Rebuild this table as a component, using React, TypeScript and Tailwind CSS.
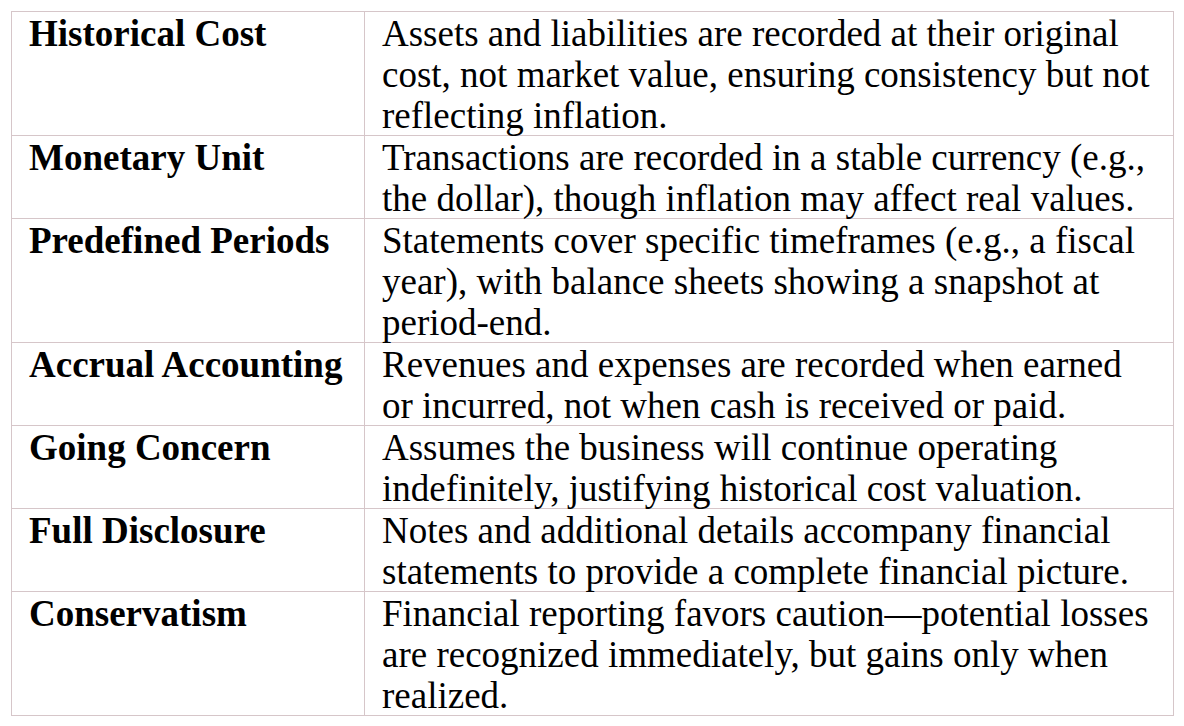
const rows: { term: string; lines: string[] }[] = [
  {
    term: "Historical Cost",
    lines: [
      "Assets and liabilities are recorded at their original",
      "cost, not market value, ensuring consistency but not",
      "reflecting inflation.",
    ],
  },
  {
    term: "Monetary Unit",
    lines: [
      "Transactions are recorded in a stable currency (e.g.,",
      "the dollar), though inflation may affect real values.",
    ],
  },
  {
    term: "Predefined Periods",
    lines: [
      "Statements cover specific timeframes (e.g., a fiscal",
      "year), with balance sheets showing a snapshot at",
      "period-end.",
    ],
  },
  {
    term: "Accrual Accounting",
    lines: [
      "Revenues and expenses are recorded when earned",
      "or incurred, not when cash is received or paid.",
    ],
  },
  {
    term: "Going Concern",
    lines: [
      "Assumes the business will continue operating",
      "indefinitely, justifying historical cost valuation.",
    ],
  },
  {
    term: "Full Disclosure",
    lines: [
      "Notes and additional details accompany financial",
      "statements to provide a complete financial picture.",
    ],
  },
  {
    term: "Conservatism",
    lines: [
      "Financial reporting favors caution\u2014potential losses",
      "are recognized immediately, but gains only when",
      "realized.",
    ],
  },
];

export default function App() {
  return (
    <div className="w-[1184px] h-[726px] bg-white pt-[11px] pl-[11px] font-['Liberation_Serif',serif] text-[37px] leading-[41px] text-black">
      <div className="w-[1163px] border border-[#d6c6c9]">
        {rows.map((row, i) => (
          <div
            key={row.term}
            className={`flex ${i > 0 ? "border-t border-[#d6c6c9]" : ""}`}
          >
            <div className="w-[353px] shrink-0 border-r border-[#d6c6c9] pl-[17px]">
              <div className="pt-[1px] -mb-[1px] font-bold whitespace-nowrap">
                {row.term}
              </div>
            </div>
            <div className="flex-1 pl-[17px]">
              <div className="pt-[1px] -mb-[1px]">
                {row.lines.map((line) => (
                  <div key={line} className="whitespace-nowrap">
                    {line}
                  </div>
                ))}
              </div>
            </div>
          </div>
        ))}
      </div>
    </div>
  );
}
